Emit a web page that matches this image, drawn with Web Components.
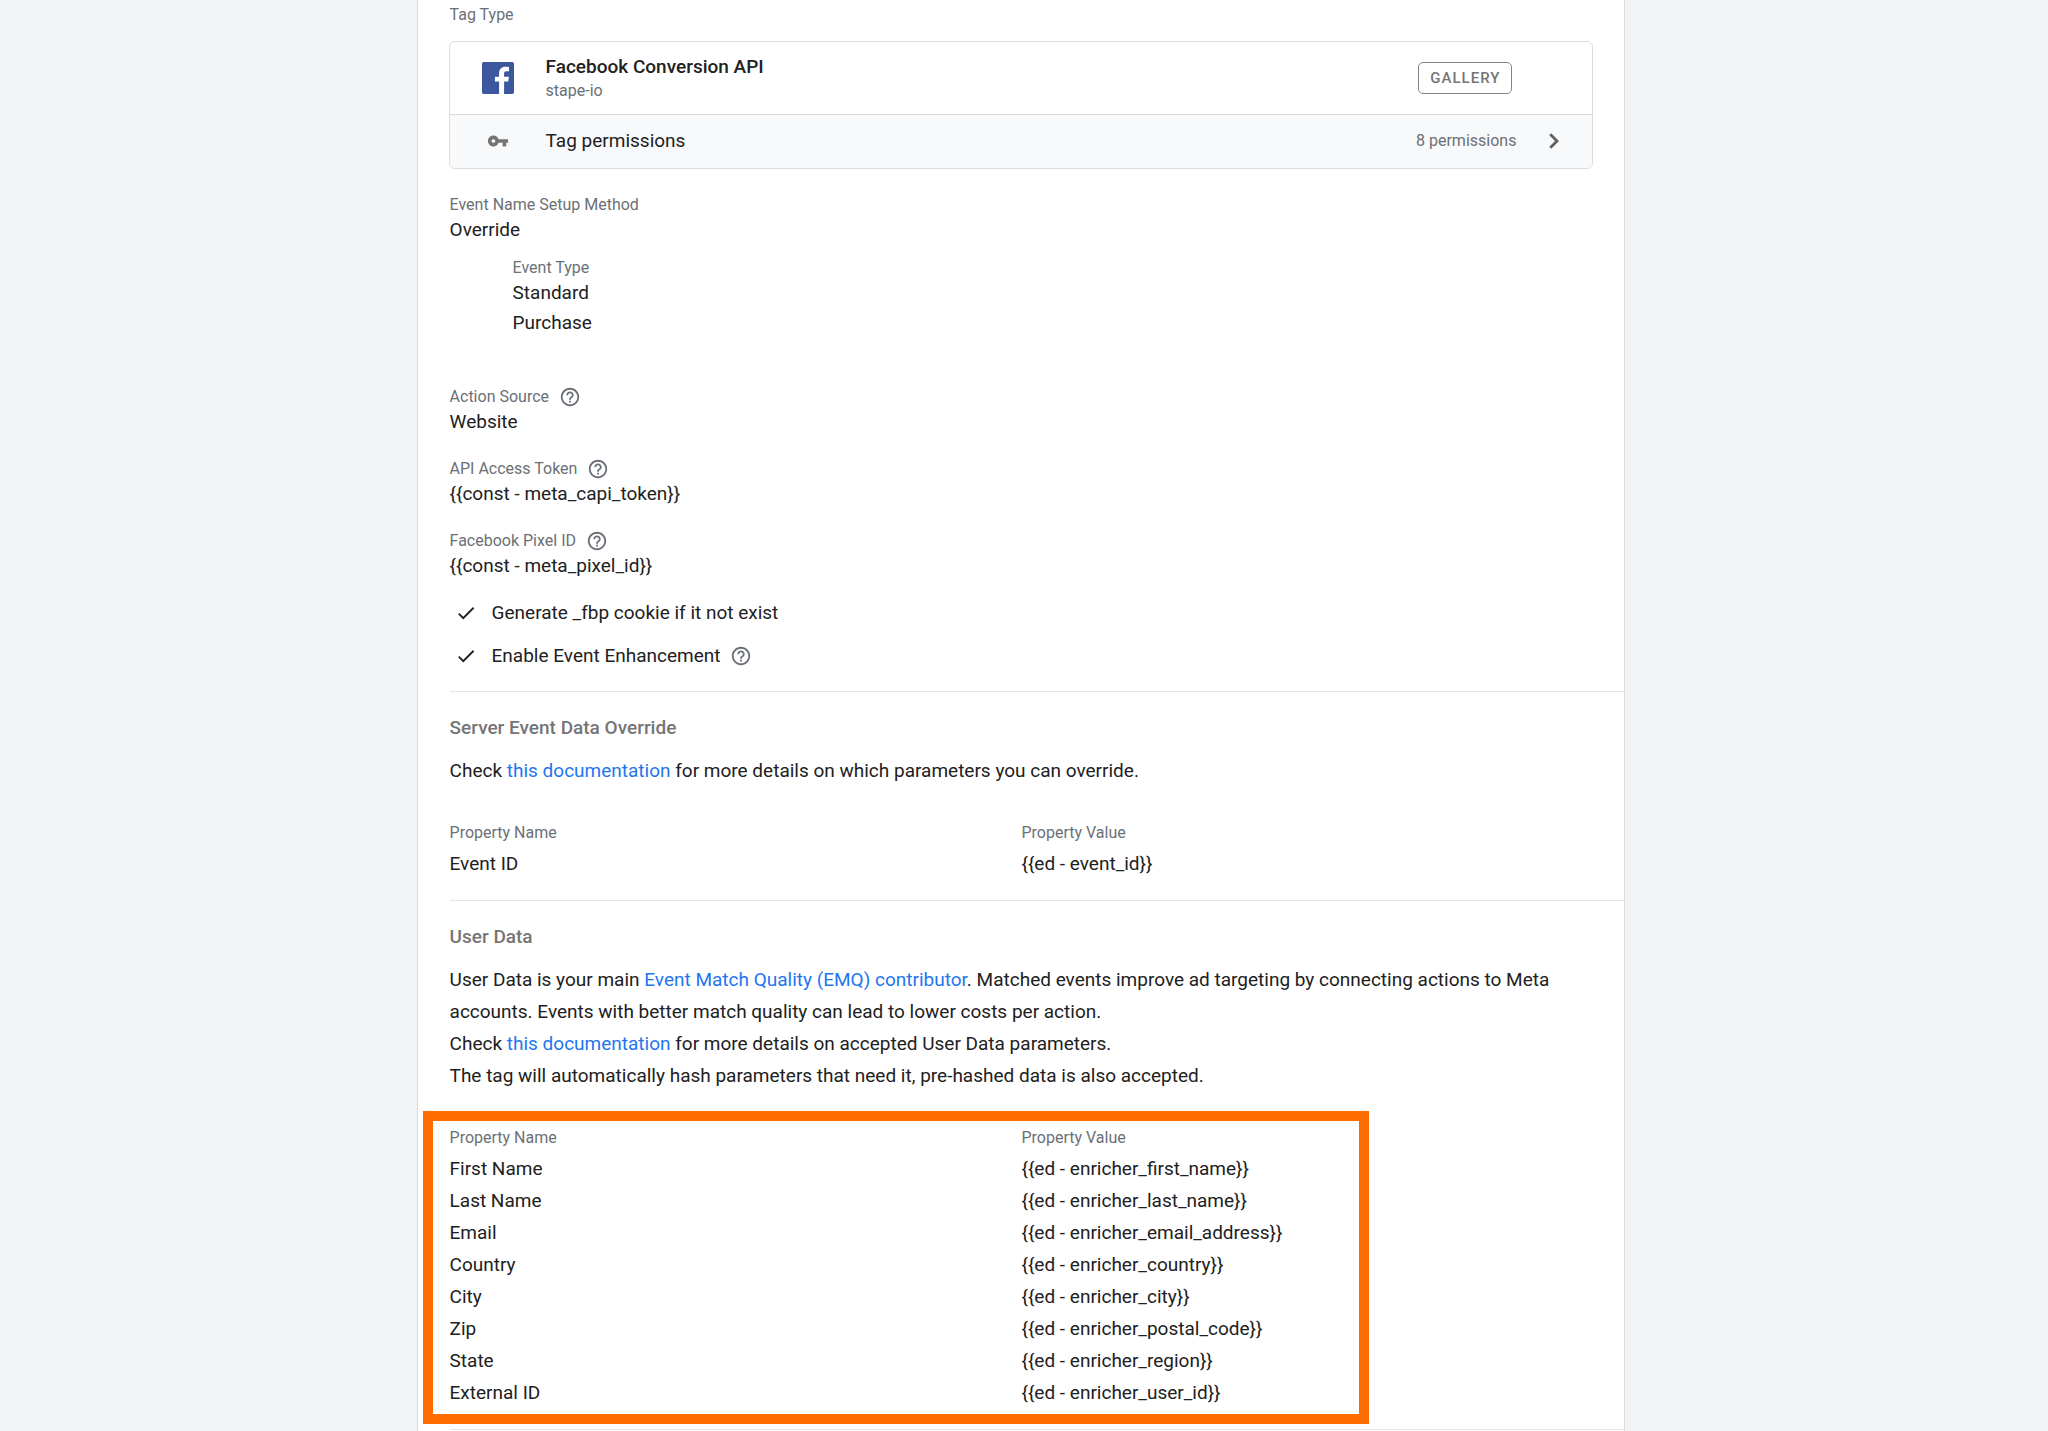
<!DOCTYPE html>
<html lang="en">
<head>
<meta charset="utf-8">
<meta name="viewport" content="width=device-width, initial-scale=1">
<title>Facebook Conversion API</title>
<style>
body{
  box-sizing: border-box;
  margin: 0;
  padding-right: 6px;
  min-height: 100vh;
  display: flex;
  background-color: #f1f3f4;
  color: #212121;
  font-family: Roboto, sans-serif;
  font-size: 19px;
  line-height: 26px;
  --label-color: #6b7076;
  --label-size: 16px;
  --line-color: #dadce0;
  --link-color: #1f76f0;
}
a{
  color: var(--link-color);
  text-decoration: none;
}
</style>
</head>
<body>
<tag-panel>
  <tag-type-card label="Tag Type" name="Facebook Conversion API" author="stape-io" permissions="8 permissions"></tag-type-card>
  <field-list>
    <tag-field label="Event Name Setup Method">
      Override
      <tag-field slot="nested" label="Event Type">
        <div>Standard</div>
        <div>Purchase</div>
      </tag-field>
    </tag-field>
    <tag-field label="Action Source" help>Website</tag-field>
    <tag-field label="API Access Token" help>{{const - meta_capi_token}}</tag-field>
    <tag-field label="Facebook Pixel ID" help>{{const - meta_pixel_id}}</tag-field>
    <check-field>Generate _fbp cookie if it not exist</check-field>
    <check-field help>Enable Event Enhancement</check-field>
  </field-list>
  <tag-section heading="Server Event Data Override">
    <div>Check <a href="#override">this documentation</a> for more details on which parameters you can override.</div>
    <property-table slot="table" id="eventData"></property-table>
  </tag-section>
  <tag-section heading="User Data">
    <div>User Data is your main <a href="#emq">Event Match Quality (EMQ) contributor</a>. Matched events improve ad targeting by connecting actions to Meta accounts. Events with better match quality can lead to lower costs per action.</div>
    <div>Check <a href="#user-data">this documentation</a> for more details on accepted User Data parameters.</div>
    <div>The tag will automatically hash parameters that need it, pre-hashed data is also accepted.</div>
    <property-table slot="table" id="userData" highlight></property-table>
  </tag-section>
</tag-panel>

<script>
/**
 * Paths of the icons, all on a 24x24 grid.
 */
const icons = {
  help: 'M11 18h2v-2h-2v2zm1-16C6.48 2 2 6.48 2 12s4.48 10 10 10 10-4.48 10-10S17.52 2 12 2zm0 18c-4.41 0-8-3.59-8-8s3.59-8 8-8 8 3.59 8 8-3.59 8-8 8zm0-14c-2.21 0-4 1.79-4 4h2c0-1.1.9-2 2-2s2 .9 2 2c0 2-3 1.75-3 5h2c0-2.25 3-2.5 3-5 0-2.21-1.79-4-4-4z',
  check: 'M9 16.17L4.83 12l-1.42 1.41L9 19 21 7l-1.41-1.41z',
  key: 'M12.65 10C11.83 7.67 9.61 6 7 6c-3.31 0-6 2.69-6 6s2.69 6 6 6c2.61 0 4.83-1.67 5.65-4H17v4h4v-4h2v-4H12.65zM7 14c-1.1 0-2-.9-2-2s.9-2 2-2 2 .9 2 2-.9 2-2 2z',
  chevron: 'M9.8 5.8L8.2 7.4 12.8 12l-4.6 4.6 1.6 1.6L16 12z',
  facebook: 'M22.68 0H1.32C.59 0 0 .59 0 1.32v21.36C0 23.41.59 24 1.32 24h11.5v-9.29H9.69v-3.62h3.13V8.41c0-3.1 1.89-4.79 4.66-4.79 1.32 0 2.46.1 2.79.14v3.24h-1.92c-1.5 0-1.79.71-1.79 1.76v2.33h3.59l-.47 3.62h-3.12V24h6.12c.73 0 1.32-.59 1.32-1.32V1.32C24 .59 23.41 0 22.68 0z'
}

/**
 * Define svg-icon.
 */
customElements.define('svg-icon',
  class extends HTMLElement {
    connectedCallback () {
      this.attachShadow({ mode: 'open' }).innerHTML = `
<style>
:host{
  display: block;
  flex: none;
  width: 22px;
  height: 22px;
}
svg{
  display: block;
  width: 100%;
  height: 100%;
  fill: currentColor;
}
</style>
<svg viewBox="0 0 24 24" aria-hidden="true"><path d="${icons[this.getAttribute('name')]}"/></svg>
`
    }
  })

/**
 * Define help-button.
 */
customElements.define('help-button',
  class extends HTMLElement {
    connectedCallback () {
      this.attachShadow({ mode: 'open' }).innerHTML = `
<style>
:host{
  display: block;
}
button{
  display: block;
  padding: 0;
  border: none;
  background: none;
  color: var(--label-color);
  cursor: pointer;
}
</style>
<button type="button" aria-label="Help"><svg-icon name="help"></svg-icon></button>
`
    }
  })

/**
 * Define tag-panel, the white sheet in the middle of the page.
 */
customElements.define('tag-panel',
  class extends HTMLElement {
    connectedCallback () {
      this.attachShadow({ mode: 'open' }).innerHTML = `
<style>
:host{
  display: block;
  box-sizing: border-box;
  width: 59.2%;
  margin: 0 auto;
  padding: 3px 0 0 32px;
  background-color: #ffffff;
  border: 1px solid var(--line-color);
  border-width: 0 1px;
}
</style>
<slot></slot>
`
    }
  })

/**
 * Define tag-type-card.
 */
customElements.define('tag-type-card',
  class extends HTMLElement {
    connectedCallback () {
      this.attachShadow({ mode: 'open' }).innerHTML = `
<style>
:host{
  display: block;
  margin-right: 31px;
}
.label{
  margin-bottom: 14px;
  color: var(--label-color);
  font-size: var(--label-size);
  line-height: 24px;
}
.card{
  overflow: hidden;
  margin-left: -1px;
  border: 1px solid var(--line-color);
  border-radius: 6px;
}
.row{
  display: flex;
  align-items: center;
  box-sizing: border-box;
  width: 100%;
  gap: 32px;
  padding: 0 23px 0 32px;
}
.type{
  height: 72px;
  padding-right: 80px;
}
.logo{
  width: 32px;
  height: 32px;
  color: #3b579d;
}
.text{
  flex: 1;
  text-align: left;
}
.name{
  font-weight: 500;
  line-height: 26px;
}
.author{
  color: var(--label-color);
  font-size: var(--label-size);
  line-height: 22px;
}
.badge{
  padding: 0 11px;
  border: 1px solid #80868b;
  border-radius: 5px;
  color: #757575;
  font-size: 15px;
  font-weight: 500;
  letter-spacing: 1px;
  line-height: 30px;
}
button{
  height: 54px;
  border: none;
  border-top: 1px solid var(--line-color);
  background-color: #f8f9fa;
  color: inherit;
  font: inherit;
  cursor: pointer;
}
button.row{
  padding-bottom: 2px;
}
.key{
  padding: 0 5px;
  color: #757575;
}
.count{
  color: var(--label-color);
  font-size: var(--label-size);
}
.chevron{
  width: 30px;
  height: 30px;
  margin-left: -9px;
  color: #616161;
}
</style>
<div class="label">${this.getAttribute('label')}</div>
<div class="card">
  <div class="row type">
    <svg-icon class="logo" name="facebook"></svg-icon>
    <div class="text">
      <div class="name">${this.getAttribute('name')}</div>
      <div class="author">${this.getAttribute('author')}</div>
    </div>
    <span class="badge">GALLERY</span>
  </div>
  <button class="row" type="button">
    <svg-icon class="key" name="key"></svg-icon>
    <span class="text">Tag permissions</span>
    <span class="count">${this.getAttribute('permissions')}</span>
    <svg-icon class="chevron" name="chevron"></svg-icon>
  </button>
</div>
`
    }
  })

/**
 * Define field-list.
 */
customElements.define('field-list',
  class extends HTMLElement {
    connectedCallback () {
      this.attachShadow({ mode: 'open' }).innerHTML = `
<style>
:host{
  display: flex;
  flex-direction: column;
  gap: 19px;
  padding: 24px 0 23px;
}
</style>
<slot></slot>
`
    }
  })

/**
 * Define tag-field, a label with its value and optional nested fields.
 */
customElements.define('tag-field',
  class extends HTMLElement {
    connectedCallback () {
      const nested = this.querySelector('[slot=nested]')
      this.attachShadow({ mode: 'open' }).innerHTML = `
<style>
:host{
  display: block;
}
.label{
  display: flex;
  align-items: center;
  gap: 10px;
  color: var(--label-color);
  font-size: var(--label-size);
  line-height: 24px;
}
.value{
  display: flex;
  flex-direction: column;
  gap: 4px;
  padding-bottom: 3px;
}
.nested{
  padding: 10px 0 27px 63px;
}
</style>
<div class="label">${this.getAttribute('label')}${this.hasAttribute('help') ? '<help-button></help-button>' : ''}</div>
<div class="value"><slot></slot></div>
${nested ? '<div class="nested"><slot name="nested"></slot></div>' : ''}
`
    }
  })

/**
 * Define check-field.
 */
customElements.define('check-field',
  class extends HTMLElement {
    connectedCallback () {
      this.attachShadow({ mode: 'open' }).innerHTML = `
<style>
:host{
  display: flex;
  align-items: center;
  gap: 10px;
  line-height: 24px;
}
label{
  display: flex;
  align-items: center;
  gap: 15px;
  padding-left: 5px;
}
.box{
  display: grid;
}
input,
svg-icon{
  grid-area: 1 / 1;
}
input{
  appearance: none;
  width: 22px;
  height: 22px;
  margin: 0;
}
svg-icon{
  pointer-events: none;
}
input:not(:checked) + svg-icon{
  visibility: hidden;
}
</style>
<label>
  <span class="box"><input type="checkbox" checked><svg-icon name="check"></svg-icon></span>
  <slot></slot>
</label>
${this.hasAttribute('help') ? '<help-button></help-button>' : ''}
`
    }
  })

/**
 * Define tag-section.
 */
customElements.define('tag-section',
  class extends HTMLElement {
    connectedCallback () {
      this.attachShadow({ mode: 'open' }).innerHTML = `
<style>
:host{
  display: block;
  padding: 23px 0 20px;
  border-top: 1px solid #e4e5e7;
}
:host(:last-of-type){
  border-bottom: 1px solid #e4e5e7;
}
h2{
  margin: 0 0 14px;
  color: #757575;
  font-size: inherit;
  font-weight: 500;
}
.text{
  margin: 0 31px 34px 0;
  line-height: 32px;
}
</style>
<h2>${this.getAttribute('heading')}</h2>
<div class="text"><slot></slot></div>
<slot name="table"></slot>
`
    }
  })

/**
 * Define property-table.
 */
customElements.define('property-table',
  class extends HTMLElement {
    connectedCallback () {
      this.attachShadow({ mode: 'open' }).innerHTML = `
<style>
:host{
  display: block;
  position: relative;
  margin-right: 31px;
}
/* orange frame drawn over the table */
:host([highlight])::after{
  content: '';
  position: absolute;
  top: -15px;
  right: 224px;
  bottom: -15px;
  left: -27px;
  border: 10px solid #ff6d00;
  pointer-events: none;
}
table{
  width: 100%;
  table-layout: fixed;
  border-collapse: collapse;
}
th,
td{
  padding: 0;
  text-align: left;
  line-height: 32px;
}
th{
  padding-bottom: 3px;
  color: var(--label-color);
  font-size: var(--label-size);
  font-weight: 400;
  line-height: 24px;
}
</style>
<table>
  <thead><tr><th>Property Name</th><th>Property Value</th></tr></thead>
  <tbody></tbody>
</table>
`
    }

    /**
     * Fills the table body.
     *
     * @param {string[][]} rows - Pairs of property name and value.
     */
    set rows (rows) {
      const tbody = this.shadowRoot.querySelector('tbody')
      tbody.textContent = ''
      rows.forEach(row => {
        const tr = tbody.insertRow()
        row.forEach(text => {
          tr.insertCell().textContent = text
        })
      })
    }
  })

document.querySelector('#eventData').rows = [
  ['Event ID', '{{ed - event_id}}']
]
document.querySelector('#userData').rows = [
  ['First Name', '{{ed - enricher_first_name}}'],
  ['Last Name', '{{ed - enricher_last_name}}'],
  ['Email', '{{ed - enricher_email_address}}'],
  ['Country', '{{ed - enricher_country}}'],
  ['City', '{{ed - enricher_city}}'],
  ['Zip', '{{ed - enricher_postal_code}}'],
  ['State', '{{ed - enricher_region}}'],
  ['External ID', '{{ed - enricher_user_id}}']
]
</script>
</body>
</html>
